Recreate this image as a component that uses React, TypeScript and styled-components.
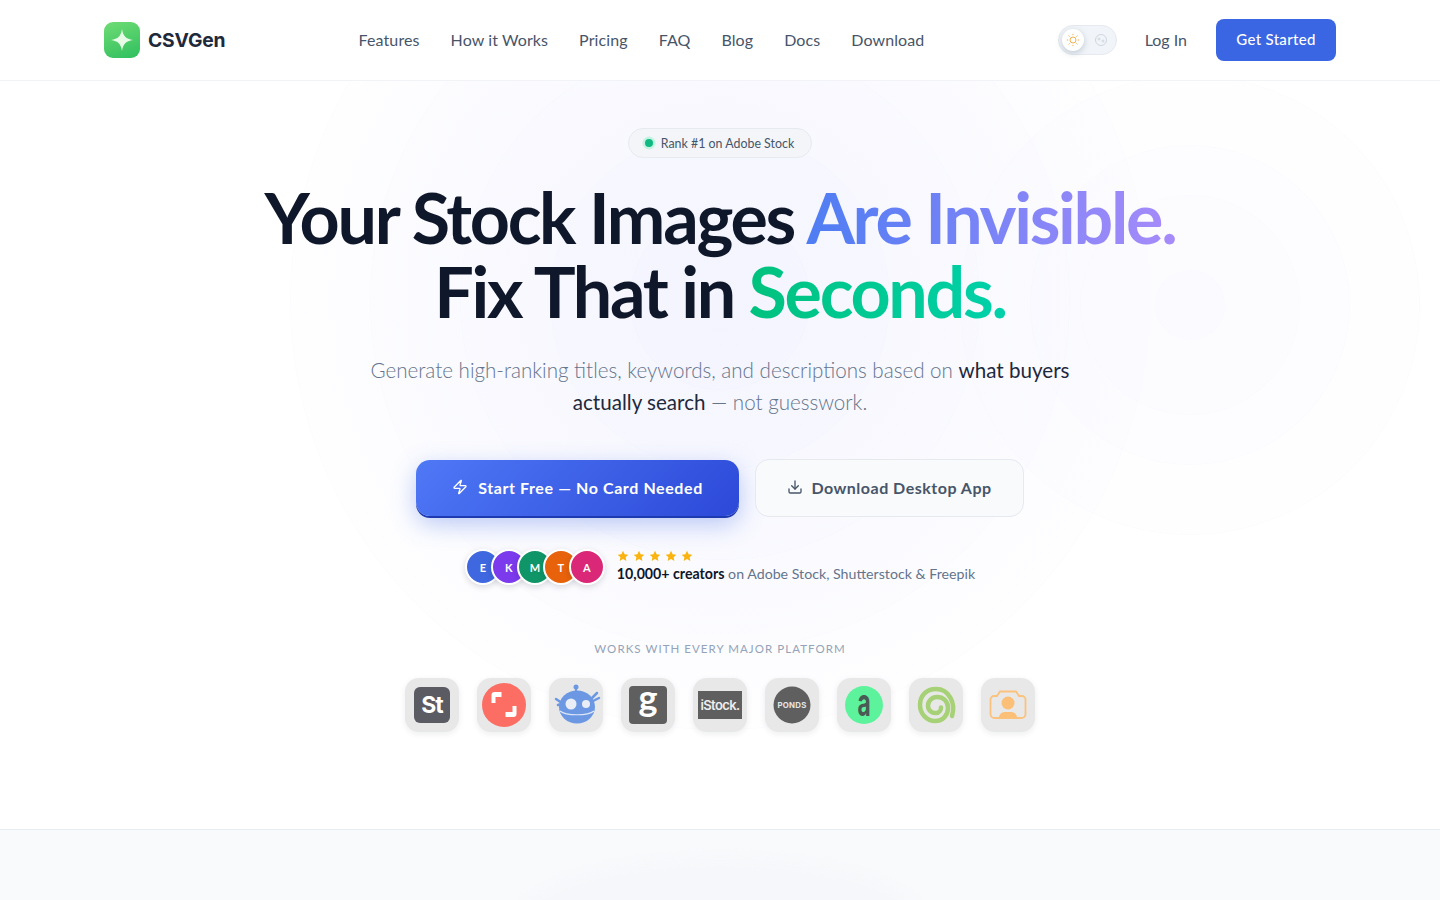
import styled, { createGlobalStyle } from 'styled-components'
import { Zap, Download } from 'lucide-react'

const navLinks = ['Features', 'How it Works', 'Pricing', 'FAQ', 'Blog', 'Docs', 'Download']

const avatars = [
  { letter: 'E', color: '#3f68e0' },
  { letter: 'K', color: '#7c3aed' },
  { letter: 'M', color: '#0f9568' },
  { letter: 'T', color: '#e8620c' },
  { letter: 'A', color: '#db2777' },
]

const platformIcons = [
  <svg key="st" width="36" height="36" viewBox="0 0 36 36">
    <rect width="36" height="36" rx="6" fill="#5b5b63" />
    <text x="18" y="26" textAnchor="middle" fontFamily="Inter, sans-serif" fontWeight="700" fontSize="23" letterSpacing="-1" fill="#fff">St</text>
  </svg>,
  <svg key="shutter" width="44" height="44" viewBox="0 0 44 44">
    <circle cx="22" cy="22" r="22" fill="#fc6e63" />
    <path d="M9.500 20v-8a3 3 0 0 1 3-3h7v5h-6v6z" fill="#fff" />
    <path d="M34.500 23v8a3 3 0 0 1-3 3h-8v-5h7v-6z" fill="#fff" />
  </svg>,
  <svg key="bot" width="50" height="42" viewBox="0 0 50 42">
    <path d="M25 1.500v7" stroke="#6c98e3" strokeWidth="2" />
    <circle cx="25" cy="3" r="2.500" fill="#6c98e3" />
    <path d="M5 15l6 4M7 21l6-2M46 9l-7 7M48 14l-8 4" stroke="#6c98e3" strokeWidth="2.500" strokeLinecap="round" />
    <ellipse cx="26" cy="23" rx="18" ry="16.500" fill="#6c98e3" />
    <path d="M9 27c6 5 28 5 34 0" stroke="#dce6f6" strokeWidth="1.200" fill="none" />
    <circle cx="20" cy="20" r="5.500" fill="#e9edf5" />
    <circle cx="35" cy="20" r="4" fill="#e9edf5" />
  </svg>,
  <svg key="getty" width="38" height="38" viewBox="0 0 38 38">
    <rect width="38" height="38" rx="4" fill="#5f5f5f" />
    <text x="19" y="25" textAnchor="middle" fontFamily="Lato, sans-serif" fontWeight="700" fontSize="36" fill="#fff">g</text>
  </svg>,
  <svg key="istock" width="44" height="28" viewBox="0 0 44 28">
    <rect width="44" height="28" fill="#5f5f5f" />
    <text x="22" y="19" textAnchor="middle" fontFamily="Inter, sans-serif" fontWeight="600" fontSize="13" letterSpacing="-0.6" fill="#eee">iStock.</text>
  </svg>,
  <svg key="ponds" width="38" height="38" viewBox="0 0 38 38">
    <circle cx="19" cy="19" r="18.500" fill="#5f5f5f" />
    <text x="19" y="22" textAnchor="middle" fontFamily="Inter, sans-serif" fontWeight="700" fontSize="7.800" letterSpacing="0.3" fill="#e6e6e6">PONDS</text>
  </svg>,
  <svg key="alamy" width="38" height="38" viewBox="0 0 38 38">
    <circle cx="19" cy="19" r="19" fill="#5df39c" />
    <text transform="translate(19 30) scale(0.6 1)" textAnchor="middle" fontFamily="Inter, sans-serif" fontWeight="700" fontSize="38" fill="#4a5a55">a</text>
  </svg>,
  <svg key="spiral" width="38" height="38" viewBox="0 0 38 38">
    <path d="M35 30C39 17 32 3 19 3 9 3 3 10 3 19c0 9 7 16 15 16 8 0 13-6 13-13 0-7-5-11-11-11-5 0-9 4-9 8.500 0 5 4 8 8 7.500 3.500 0 5-3 5-5.500" fill="none" stroke="#a7d176" strokeWidth="4.500" strokeLinecap="round" />
  </svg>,
  <svg key="freepik" width="38" height="30" viewBox="0 0 38 30">
    <path d="M8 6l3-4.500h16L30 6h3a3.500 3.500 0 0 1 3.500 3.500V24a4 4 0 0 1-4 4H5.500a4 4 0 0 1-4-4V9.500A3.500 3.500 0 0 1 5 6z" fill="none" stroke="#fbc27e" strokeWidth="1.800" />
    <circle cx="19" cy="13" r="6.500" fill="#fbbf78" />
    <path d="M10 28c0-4 3-6 6-6h6c3 0 6 2 6 6z" fill="#fbbf78" />
  </svg>,
]

const ringSets = [
  { x: 720, y: 300, sizes: [180, 340, 520, 700, 860] },
  { x: 1190, y: 305, sizes: [70, 220, 320, 460] },
]

export default function App() {
  return (
    <>
      <GlobalStyle />
      <Page>
        <Header>
          <HeaderInner>
            <Brand>
              <LogoTile>
                <svg width="24" height="24" viewBox="0 0 24 24">
                  <path d="M12 1c1 7 4 10 11 11-7 1-10 4-11 11-1-7-4-10-11-11 7-1 10-4 11-11z" fill="#e8fbe6" />
                </svg>
              </LogoTile>
              <BrandName>CSVGen</BrandName>
            </Brand>
            <Nav>
              {navLinks.map((link) => (
                <NavLink key={link}>{link}</NavLink>
              ))}
            </Nav>
            <HeaderActions>
              <ThemeToggle>
                <ToggleKnob>
                  <svg width="14" height="14" viewBox="0 0 14 14" fill="none" stroke="#f5b04c" strokeWidth="1">
                    <circle cx="7" cy="7" r="3" />
                    <path d="M7 .8v1.400M7 11.800v1.400M.8 7h1.400M11.800 7h1.400M2.600 2.600l1 1M10.400 10.400l1 1M2.600 11.400l1-1M10.400 3.600l1-1" />
                  </svg>
                </ToggleKnob>
                <svg width="14" height="14" viewBox="0 0 14 14" fill="none" stroke="#cfd5df" strokeWidth="1">
                  <circle cx="7" cy="7" r="5.500" />
                  <circle cx="5" cy="6" r="1" />
                  <circle cx="9" cy="8" r="1" />
                </svg>
              </ThemeToggle>
              <LogIn>Log In</LogIn>
              <GetStarted>Get Started</GetStarted>
            </HeaderActions>
          </HeaderInner>
        </Header>

        <Hero>
          <HeroGlow />
          {ringSets.map((set) =>
            set.sizes.map((size) => (
              <Ring key={`${set.x}-${size}`} style={{ left: set.x - size / 2, top: set.y - 81 - size / 2, width: size, height: size }} />
            )),
          )}
          <RankBadge>
            <RankDot />
            Rank #1 on Adobe Stock
          </RankBadge>
          <Title>
            Your Stock Images <BlueWords>Are Invisible.</BlueWords>
            <br />
            Fix That in <GreenWords>Seconds.</GreenWords>
          </Title>
          <Lead>
            Generate high-ranking titles, keywords, and descriptions based on <strong>what buyers actually search</strong> — not guesswork.
          </Lead>
          <CtaRow>
            <PrimaryCta>
              <Zap size={16} strokeWidth={2} />
              Start Free — No Card Needed
            </PrimaryCta>
            <SecondaryCta>
              <Download size={16} strokeWidth={2} />
              Download Desktop App
            </SecondaryCta>
          </CtaRow>
          <Proof>
            <AvatarStack>
              {avatars.map((a) => (
                <Avatar key={a.letter} $color={a.color}>{a.letter}</Avatar>
              ))}
            </AvatarStack>
            <ProofText>
              <Stars>
                {avatars.map((a) => (
                  <svg key={a.letter} width="12" height="12" viewBox="0 0 24 24">
                    <path d="M12 1.500l3.200 6.900 7.500.9-5.500 5.100 1.500 7.400L12 18.100l-6.700 3.700 1.500-7.400L1.300 9.300l7.500-.9z" fill="#fbb40f" />
                  </svg>
                ))}
              </Stars>
              <ProofLine><strong>10,000+ creators</strong> on Adobe Stock, Shutterstock &amp; Freepik</ProofLine>
            </ProofText>
          </Proof>
          <PlatformLabel>WORKS WITH EVERY MAJOR PLATFORM</PlatformLabel>
          <PlatformRow>
            {platformIcons.map((icon) => (
              <PlatformTile key={icon.key}>{icon}</PlatformTile>
            ))}
          </PlatformRow>
        </Hero>

        <NextSection>
          <NextGlow />
        </NextSection>
      </Page>
    </>
  )
}

const GlobalStyle = createGlobalStyle`
  * { box-sizing: border-box; }
  html, body { margin: 0; padding: 0; background: #fff; }
  body { font-family: Lato, "Open Sans", sans-serif; overflow: hidden; }
`

const Page = styled.div`
  height: 900px;
  overflow: hidden;
  display: flex;
  flex-direction: column;
`

const Header = styled.header`
  height: 81px;
  flex-shrink: 0;
  border-bottom: 1px solid #f1f3f7;
  background: #fff;
`

const HeaderInner = styled.div`
  width: 1232px;
  height: 80px;
  margin: 0 auto;
  display: flex;
  align-items: center;
  justify-content: space-between;
`

const Brand = styled.div`
  display: flex;
  align-items: center;
  gap: 8px;
`

const LogoTile = styled.div`
  width: 36px;
  height: 36px;
  border-radius: 9px;
  background: linear-gradient(160deg, #6fdc74, #2fbf5f);
  display: flex;
  align-items: center;
  justify-content: center;
`

const BrandName = styled.span`
  font-family: Inter, sans-serif;
  font-size: 19.300px;
  font-weight: 700;
  color: #1e293b;
  letter-spacing: -0.2px;
`

const Nav = styled.nav`
  display: flex;
  gap: 31px;
  margin-left: 0;
  padding-bottom: 2px;
`

const NavLink = styled.a`
  font-size: 16px;
  color: #475569;
  letter-spacing: 0.1px;
`

const HeaderActions = styled.div`
  display: flex;
  align-items: center;
`

const ThemeToggle = styled.div`
  width: 59px;
  height: 30px;
  border-radius: 15px;
  background: #f1f5f9;
  border: 1px solid #e6eaf0;
  display: flex;
  align-items: center;
  justify-content: space-between;
  padding: 0 8px 0 3px;
  margin-right: 28px;
`

const ToggleKnob = styled.div`
  width: 22px;
  height: 22px;
  border-radius: 50%;
  background: #fff;
  box-shadow: 0 2px 6px rgba(100, 116, 139, 0.35);
  display: flex;
  align-items: center;
  justify-content: center;
`

const LogIn = styled.a`
  font-size: 16px;
  color: #475569;
  margin-right: 29px;
  padding-bottom: 2px;
`

const GetStarted = styled.button`
  width: 120px;
  height: 42px;
  border: none;
  border-radius: 8px;
  background: #3b66e3;
  color: #fff;
  font-family: inherit;
  font-size: 15px;
  font-weight: 500;
  letter-spacing: 0.3px;
  padding-bottom: 3px;
`

const Hero = styled.section`
  position: relative;
  height: 748px;
  flex-shrink: 0;
  display: flex;
  flex-direction: column;
  align-items: center;
  padding-top: 47px;
  overflow: hidden;
  background: #fff;

  & > *:not(span) {
    position: relative;
  }
`

const HeroGlow = styled.span`
  position: absolute;
  left: 280px;
  top: -220px;
  width: 880px;
  height: 880px;
  border-radius: 50%;
  background: radial-gradient(circle, rgba(99, 120, 241, 0.045), rgba(99, 120, 241, 0) 70%);
`

const Ring = styled.span`
  position: absolute;
  border-radius: 50%;
  background: rgba(99, 102, 241, 0.003);
  border: 1px solid rgba(99, 102, 241, 0.018);
`

const RankBadge = styled.div`
  height: 30px;
  padding: 0 17px 0 16px;
  border-radius: 15px;
  background: #f3f5f9;
  border: 1px solid #e6eaf1;
  display: flex;
  align-items: center;
  gap: 8px;
  font-size: 12.400px;
  color: #475569;
`

const RankDot = styled.span`
  width: 8px;
  height: 8px;
  border-radius: 50%;
  background: #10b981;
  box-shadow: 0 0 0 2.500px #c4f3e1;
`

const Title = styled.h1`
  margin: 22px 0 0;
  font-size: 70px;
  line-height: 74px;
  font-weight: 700;
  color: #0f172a;
  text-align: center;
  letter-spacing: -2.300px;
  white-space: nowrap;
`

const BlueWords = styled.span`
  background: linear-gradient(90deg, #4f7df3, #a78bfa);
  -webkit-background-clip: text;
  background-clip: text;
  color: transparent;
`

const GreenWords = styled.span`
  background: linear-gradient(90deg, #00c27e, #00d1aa);
  -webkit-background-clip: text;
  background-clip: text;
  color: transparent;
`

const Lead = styled.p`
  width: 720px;
  margin: 26px 0 0;
  font-size: 20.600px;
  font-weight: 300;
  line-height: 32px;
  color: #64748b;
  text-align: center;

  strong {
    font-weight: 400;
    color: #1e293b;
  }
`

const CtaRow = styled.div`
  display: flex;
  gap: 16px;
  margin-top: 41px;
`

const PrimaryCta = styled.button`
  width: 323px;
  height: 56px;
  margin-top: 1px;
  border: none;
  border-radius: 14px;
  background: linear-gradient(135deg, #4f78f6, #2c49d8);
  box-shadow: 0 2px 0 #1e3ab0, 0 8px 24px rgba(59, 102, 227, 0.35);
  color: #fff;
  font-family: inherit;
  font-size: 16px;
  font-weight: 700;
  letter-spacing: 0.6px;
  padding-bottom: 3px;
  display: flex;
  align-items: center;
  justify-content: center;
  gap: 10px;
`

const SecondaryCta = styled.button`
  width: 269px;
  height: 58px;
  border: 1px solid #e5e9f0;
  border-radius: 14px;
  background: #f9fafc;
  color: #475569;
  font-family: inherit;
  font-size: 16px;
  font-weight: 700;
  letter-spacing: 0.5px;
  padding-bottom: 3px;
  display: flex;
  align-items: center;
  justify-content: center;
  gap: 8px;
`

const Proof = styled.div`
  display: flex;
  align-items: center;
  gap: 12px;
  margin-top: 32px;
`

const AvatarStack = styled.div`
  display: flex;
`

const Avatar = styled.span<{ $color: string }>`
  width: 36px;
  height: 36px;
  border-radius: 50%;
  background: ${(p) => p.$color};
  border: 2px solid #fff;
  box-shadow: 0 2px 6px rgba(15, 23, 42, 0.15);
  color: #fff;
  font-size: 11px;
  font-weight: 700;
  display: flex;
  align-items: center;
  justify-content: center;

  & + & {
    margin-left: -10px;
  }
`

const ProofText = styled.div`
  display: flex;
  flex-direction: column;
  gap: 3px;
  padding-bottom: 2px;
`

const Stars = styled.div`
  display: flex;
  gap: 4px;
`

const ProofLine = styled.div`
  font-size: 14.200px;
  line-height: 17px;
  color: #64748b;

  strong {
    font-weight: 700;
    color: #0f172a;
  }
`

const PlatformLabel = styled.div`
  margin-top: 57px;
  font-size: 11.500px;
  letter-spacing: 1.050px;
  color: #94a3b8;
`

const PlatformRow = styled.div`
  display: flex;
  gap: 18px;
  margin-top: 23px;
`

const PlatformTile = styled.div`
  width: 54px;
  height: 54px;
  border-radius: 14px;
  background: #e8e8e8;
  box-shadow: 0 2px 6px rgba(15, 23, 42, 0.08);
  display: flex;
  align-items: center;
  justify-content: center;

  svg {
    overflow: visible;
  }
`

const NextSection = styled.section`
  flex: 1;
  position: relative;
  background: #f8fafc;
  border-top: 1px solid #e6ebf0;
  overflow: hidden;
`

const NextGlow = styled.div`
  position: absolute;
  left: 520px;
  top: 28px;
  width: 400px;
  height: 120px;
  border-radius: 50%;
  background: #f6f7fa;
  filter: blur(6px);
`
